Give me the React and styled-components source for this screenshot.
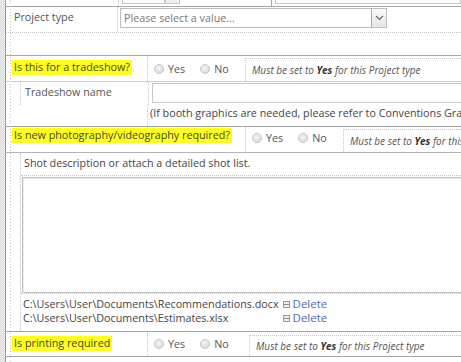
import React from "react";
import styled, { createGlobalStyle } from "styled-components";

const GlobalStyle = createGlobalStyle`
  html, body {
    margin: 0;
    padding: 0;
    background: #fff;
  }
  body {
    font-family: "Open Sans", "Noto Sans", sans-serif;
    font-size: 10.75px;
    color: #444;
  }
`;

const Screen = styled.div`
  display: flex;
  width: 461px;
  height: 362px;
  overflow: hidden;
  background: #fff;
`;

const Gutter = styled.div`
  flex: none;
  width: 5px;
  border-right: 1px solid #9c9c9c;
  background: repeating-conic-gradient(#d9d9d9 0 25%, #f1f1f1 0 50%) 0 0 / 2px 2px;
`;

const Page = styled.div`
  flex: 1;
  min-width: 0;
  overflow: hidden;
  background: repeating-linear-gradient(to bottom, #c4c4c4 0 1px, transparent 1px 3px) 4px 0 / 1px 100% no-repeat;
`;

/* top stub of the previous row, cut off by the window */
const TopStub = styled.div`
  display: flex;
  align-items: flex-end;
  height: 6px;
  border-bottom: 1px solid #a6a6a6;
`;

const StubCell = styled.div`
  width: ${(p) => p.$w}px;
  height: 6px;
  border-right: 1px ${(p) => (p.$solid ? "solid #a6a6a6" : "dotted #c4c4c4")};
`;

const StubBox = styled.div`
  margin-left: ${(p) => p.$ml || 0}px;
  width: ${(p) => (p.$w ? `${p.$w}px` : "auto")};
  flex: ${(p) => (p.$w ? "none" : 1)};
  height: 3px;
  margin-bottom: 2px;
  border: 1px solid #c8c8c8;
  border-top: none;
  background: ${(p) => (p.$btn ? "#eee" : "#fff")};
`;

const ProjectRow = styled.div`
  display: grid;
  grid-template-columns: 112px 1fr;
  height: 25px;
  border-bottom: 1px dotted #c4c4c4;
`;

const CellLabel = styled.div`
  padding: 3px 0 0 8px;
  line-height: 14px;
  color: #555;
  border-right: 1px dotted #c4c4c4;
`;

const SelectCell = styled.div`
  padding: 1px 0 0 2px;
`;

const Select = styled.div`
  display: flex;
  align-items: stretch;
  width: 267px;
  height: 20px;
  box-sizing: border-box;
  border: 1px solid #bdbdbd;
  background: #fff;
`;

const Placeholder = styled.span`
  flex: 1;
  padding-left: 3px;
  line-height: 18px;
  color: #777;
`;

const ArrowBtn = styled.span`
  width: 14px;
  display: flex;
  align-items: center;
  justify-content: center;
  border-left: 1px solid #a8a8a8;
  background: linear-gradient(#fafafa, #e6e6e6);
`;

const Gap = styled.div`
  height: 22px;
`;

const Section = styled.div`
  border-top: 1px solid #a6a6a6;
  border-bottom: ${(p) => (p.$closed ? "1px solid #a6a6a6" : "none")};
`;

const QRow = styled.div`
  display: grid;
  grid-template-columns: ${(p) => p.$label}px ${(p) => p.$radio}px 1fr;
  height: ${(p) => p.$h || 25}px;
`;

const QLabel = styled.div`
  padding: ${(p) => p.$top}px 0 0 6px;
  border-right: 1px dotted #c4c4c4;
`;

const Highlight = styled.span`
  display: inline-block;
  padding: 0 2px;
  line-height: 15px;
  background: #ffff1a;
  color: #444;
  white-space: nowrap;
`;

const Radios = styled.div`
  display: flex;
  align-items: center;
  padding-left: 6px;
  padding-bottom: ${(p) => p.$lift || 0}px;
  gap: 15px;
`;

const RadioOption = styled.label`
  display: flex;
  align-items: center;
  gap: 4px;
  color: #555;
`;

const RadioDot = styled.span`
  width: 8px;
  height: 8px;
  border-radius: 50%;
  border: 1px solid #c4c4c4;
  background: radial-gradient(circle at 40% 35%, #f4f4f4, #d6d6d6);
`;

const Hint = styled.div`
  margin-top: ${(p) => p.$top || 3}px;
  display: flex;
  align-items: center;
  padding-left: 6px;
  border: 1px dotted #c4c4c4;
  border-bottom: none;
  border-right: none;
  font-size: 10px;
  font-style: italic;
  color: #555;
  white-space: nowrap;

  b {
    color: #333;
  }
`;

const SubRule = styled.div`
  border-top: 1px solid #cfcfcf;
`;

const NameRow = styled.div`
  display: grid;
  grid-template-columns: 128px 1fr;
  height: 23px;
  margin-left: 14px;
  border-left: 1px dotted #c4c4c4;
`;

const SubLabel = styled.div`
  padding: 3px 0 0 4px;
  line-height: 14px;
  color: #555;
  border-right: 1px dotted #c4c4c4;
`;

const TextInput = styled.div`
  margin: 1px 0 0 3px;
  height: 18px;
  border: 1px solid #c8c8c8;
  border-right: none;
`;

const NoteRow = styled.div`
  display: grid;
  grid-template-columns: 142px 1fr;
  height: 21px;
`;

const EmptyCell = styled.div`
  border-right: 1px dotted #c4c4c4;
`;

const Note = styled.div`
  padding: 1px 0 0 2px;
  line-height: 14px;
  white-space: nowrap;
`;

const DescBlock = styled.div`
  border-top: 1px solid #b4b4b4;
`;

const DescInner = styled.div`
  margin-left: 14px;
  border-left: 1px dotted #c4c4c4;
`;

const DescLabel = styled.div`
  height: 22px;
  padding-left: 3px;
  line-height: 20px;
  border-bottom: 1px dotted #c4c4c4;
  white-space: nowrap;
`;

const TextArea = styled.div`
  margin: 1px 0 0 1px;
  height: 114px;
  border: 1px solid #c2c2c2;
  border-right: none;
  box-shadow: inset 1px 1px 0 #ececec;
`;

const FileList = styled.div`
  display: grid;
  grid-template-columns: max-content auto;
  align-content: start;
  column-gap: 4px;
  height: 34px;
  padding: 3px 0 0 2px;
  border-top: 1px dotted #c4c4c4;
  line-height: 14px;
`;

const FilePath = styled.span`
  white-space: nowrap;
`;

const DeleteLink = styled.a`
  display: flex;
  align-items: center;
  gap: 3px;
  color: #4a6db3;
  font-size: 11.5px;
  text-decoration: none;
`;

const DeleteIcon = styled.span`
  width: 5px;
  height: 5px;
  border: 1px solid #9a9a9a;
  background: linear-gradient(#eee 0 2px, #8a8a8a 2px 3px, #eee 3px);
`;

const Radio = ({ label }) => (
  <RadioOption>
    <RadioDot />
    {label}
  </RadioOption>
);

const YesNo = ({ lift }) => (
  <Radios $lift={lift}>
    <Radio label="Yes" />
    <Radio label="No" />
  </Radios>
);

const MustBeYes = ({ top }) => (
  <Hint $top={top}>
    Must be set to&nbsp;<b>Yes</b>&nbsp;for this Project type
  </Hint>
);

const Chevron = () => (
  <svg width="9" height="6" viewBox="0 0 9 6">
    <path d="M1 1l3.5 3.5L8 1" fill="none" stroke="#666" strokeWidth="1.2" />
  </svg>
);

const files = [
  "C:\\Users\\User\\Documents\\Recommendations.docx",
  "C:\\Users\\User\\Documents\\Estimates.xlsx",
];

export default function App() {
  return (
    <>
      <GlobalStyle />
      <Screen>
        <Gutter />
        <Page>
          <TopStub>
            <StubCell $w={112} />
            <StubBox $ml={3} $w={41} />
            <StubBox $w={13} $btn />
            <StubCell $w={91} $solid />
            <StubBox $ml={3} />
          </TopStub>

          <ProjectRow>
            <CellLabel>Project type</CellLabel>
            <SelectCell>
              <Select>
                <Placeholder>Please select a value...</Placeholder>
                <ArrowBtn>
                  <Chevron />
                </ArrowBtn>
              </Select>
            </SelectCell>
          </ProjectRow>

          <Gap />

          <Section>
            <QRow $label={142} $radio={97}>
              <QLabel $top={4}>
                <Highlight>Is this for a tradeshow?</Highlight>
              </QLabel>
              <YesNo />
              <MustBeYes top={2} />
            </QRow>
            <SubRule />
            <NameRow>
              <SubLabel>Tradeshow name</SubLabel>
              <TextInput />
            </NameRow>
            <NoteRow>
              <EmptyCell />
              <Note>(If booth graphics are needed, please refer to Conventions Graphics)</Note>
            </NoteRow>
          </Section>

          <Section>
            <QRow $label={240} $radio={97}>
              <QLabel $top={1}>
                <Highlight>Is new photography/videography required?</Highlight>
              </QLabel>
              <YesNo lift={3} />
              <MustBeYes top={2} />
            </QRow>
            <DescBlock>
              <DescInner>
                <DescLabel>Shot description or attach a detailed shot list.</DescLabel>
                <TextArea />
                <FileList>
                  {files.map((f) => (
                    <React.Fragment key={f}>
                      <FilePath>{f}</FilePath>
                      <DeleteLink href="#">
                        <DeleteIcon />
                        Delete
                      </DeleteLink>
                    </React.Fragment>
                  ))}
                </FileList>
              </DescInner>
            </DescBlock>
          </Section>

          <Section $closed>
            <QRow $label={142} $radio={101} $h={24}>
              <QLabel $top={4}>
                <Highlight>Is printing required</Highlight>
              </QLabel>
              <YesNo />
              <MustBeYes top={3} />
            </QRow>
          </Section>
        </Page>
      </Screen>
    </>
  );
}
